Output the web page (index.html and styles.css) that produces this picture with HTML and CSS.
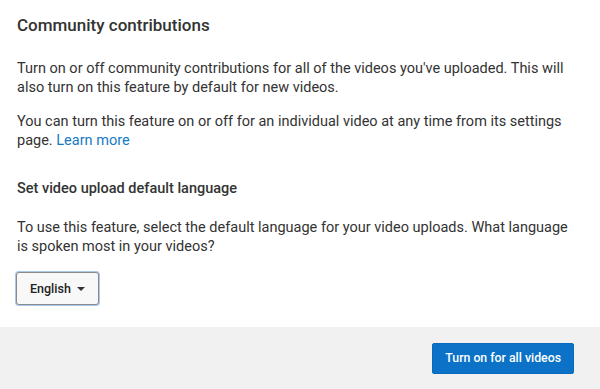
FILE: index.html
```html
<!DOCTYPE html>
<html lang="en">

<head>
    <meta charset="UTF-8" />
    <meta name="viewport" content="width=device-width, initial-scale=1.0" />
    <title>Community contributions</title>
    <link rel="stylesheet" href="styles.css">
</head>

<body>
    <div class="dialog">
        <div class="content">
            <h1>Community contributions</h1>
            <p>Turn on or off community contributions for all of the videos you've uploaded. This will also turn on this feature by default for new videos.</p>
            <p>You can turn this feature on or off for an individual video at any time from its settings page. <a href="#">Learn more</a></p>
            <h2>Set video upload default language</h2>
            <p>To use this feature, select the default language for your video uploads. What language is spoken most in your videos?</p>
            <button class="lang-select" type="button">
                English
                <span class="caret"></span>
            </button>
        </div>
        <div class="footer">
            <button class="primary" type="button">Turn on for all videos</button>
        </div>
    </div>
</body>

</html>
```

FILE: styles.css
```css
body {
    margin: 0;
    font-family: Roboto, "Liberation Sans", Arial, sans-serif;
    color: #333;
    background: #fff;
}

.dialog {
    width: 600px;
    height: 389px;
    display: flex;
    flex-direction: column;
}

.content {
    flex: 1;
    padding: 13px 24px 0 17px;
}

.content h1 {
    font-size: 17px;
    font-weight: 500;
    margin: 0 0 22px;
    line-height: 24px;
}

.content h2 {
    font-size: 14.5px;
    font-weight: 500;
    margin: 29px 0 20px;
    line-height: 19px;
}

.content p {
    font-size: 14.5px;
    line-height: 19px;
    margin: 0 0 15px;
}

.content a {
    color: #167ac6;
    text-decoration: none;
}

.lang-select {
    display: flex;
    align-items: center;
    gap: 6px;
    margin-top: 16px;
    margin-left: -1px;
    height: 33px;
    padding: 0 13px;
    font-family: inherit;
    font-size: 12.5px;
    font-weight: 500;
    color: #222;
    background: #f8f8f8;
    border: 1px solid #8a8a8a;
    border-radius: 3px;
    box-shadow: 0 0 0 1px #a9c9ea;
}

.caret {
    width: 0;
    height: 0;
    border-left: 4px solid transparent;
    border-right: 4px solid transparent;
    border-top: 4px solid #333;
}

.footer {
    height: 62px;
    background: #f1f1f1;
    display: flex;
    justify-content: flex-end;
    align-items: center;
    padding: 0 26px;
}

.footer .primary {
    height: 31px;
    padding: 0 12px;
    font-family: inherit;
    font-size: 12.3px;
    font-weight: 500;
    color: #fff;
    background: #0b72c8;
    border: 1px solid #0a6bbd;
    border-radius: 2px;
}
```
